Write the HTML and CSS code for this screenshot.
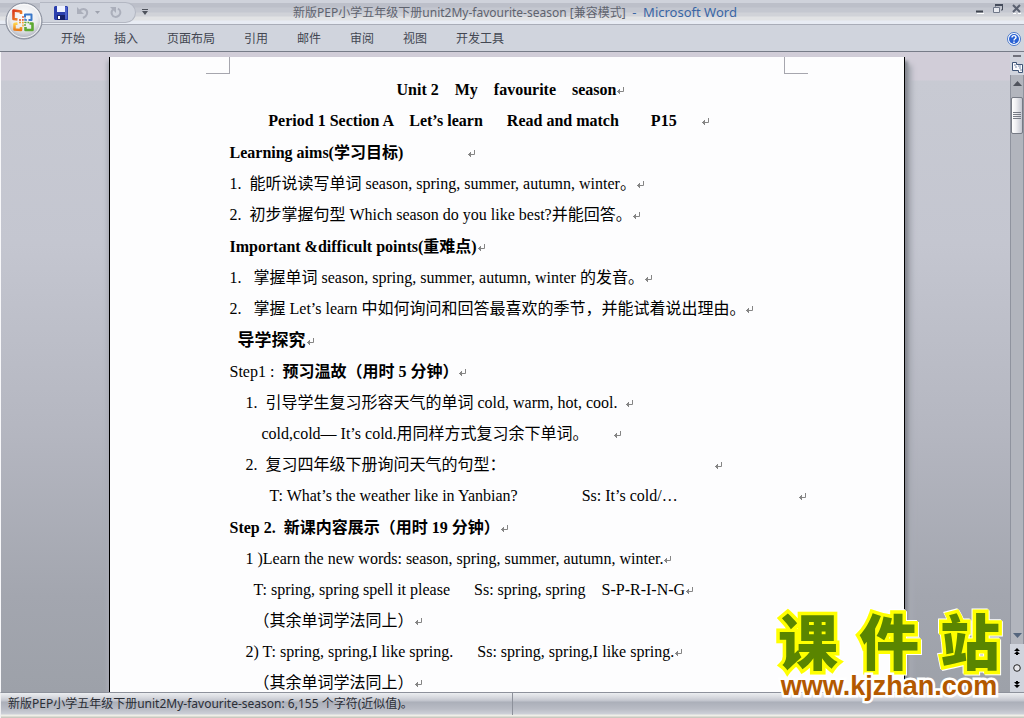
FILE: index.html
```html
<!DOCTYPE html>
<html lang="zh-CN">
<head>
<meta charset="utf-8">
<title>新版PEP小学五年级下册unit2My-favourite-season</title>
<link rel="stylesheet" href="styles.css">
</head>
<body>
<svg class="defs" aria-hidden="true">
  <symbol id="ret" viewBox="0 0 8 8"><path d="M7.5 0v4.5H1M3.5 2v5M2.5 3v3M1.500 4v1" fill="none" stroke="#858585"/></symbol>
</svg>
<header class="titlebar">
  <button class="office" aria-label="Office">
    <svg viewBox="0 0 38 38" width="38" height="38">
      <defs>
        <radialGradient id="orb" cx="50%" cy="35%" r="65%"><stop offset="0" stop-color="#fff"/><stop offset=".6" stop-color="#e9eaee"/><stop offset="1" stop-color="#a9adb8"/></radialGradient>
        <linearGradient id="og" x1="0" y1="0" x2="1" y2="1"><stop offset="0" stop-color="#d9381c"/><stop offset="1" stop-color="#f59a2c"/></linearGradient>
        <linearGradient id="oy" x1="0" y1="0" x2="0" y2="1"><stop offset="0" stop-color="#ffd24a"/><stop offset="1" stop-color="#ea7a18"/></linearGradient>
      </defs>
      <circle cx="19" cy="19" r="18" fill="url(#orb)" stroke="#858b99"/>
      <circle cx="19" cy="19" r="16.500" fill="none" stroke="#fff" opacity=".8"/>
      <g fill="none" stroke-linejoin="round">
        <path d="M16 12V9.500L8.500 8.500v8.500l4 .5" stroke="url(#og)" stroke-width="2.600"/>
        <path d="M20 15.500v-3h6.500v5.500h-3" stroke="#3b78c9" stroke-width="2"/>
        <path d="M16 25v3l-6.500-.5V22l3-.5" stroke="url(#oy)" stroke-width="2.600"/>
        <path d="M20.500 25v3h7v-6.500h-3" stroke="#5da832" stroke-width="2.600"/>
      </g>
      <path d="M18 14v4h-4" fill="none" stroke="#e0562a" stroke-width="1.400" stroke-dasharray="2 1"/>
      <path d="M20 16.500V18h2" fill="none" stroke="#3b78c9" stroke-width="1.400"/>
      <path d="M14 20.500h4v4" fill="none" stroke="#f0a030" stroke-width="1.400" stroke-dasharray="2 1"/>
      <path d="M20 24v-3.500h4" fill="none" stroke="#5da832" stroke-width="1.400" stroke-dasharray="2 1"/>
    </svg>
  </button>
  <div class="quick">
    <button aria-label="保存"><svg width="14" height="14" viewBox="0 0 14 14"><path d="M0 1l1-1h12l1 1v13H1l-1-1z" fill="#2b3fae"/><path d="M3 0h8v6H3z" fill="#eef2ff"/><path d="M3 9h8v5H3z" fill="#16206a"/><path d="M4 10h2v3H4z" fill="#fff"/><path d="M12 1v12" stroke="#6e84e8"/></svg></button>
    <button class="undo" aria-label="撤消"><svg width="13" height="13" viewBox="0 0 13 13"><path d="M3 5c5-4 9-1 8 3-.5 2-2 3-4 4" fill="none" stroke="#abafbb" stroke-width="2"/><path d="M1 1v7h7z" fill="#abafbb"/></svg></button>
    <button class="drop" aria-label="撤消列表"><svg width="5" height="3" viewBox="0 0 5 3"><path d="M0 0h5L2.500 3z" fill="#9ea2ae"/></svg></button>
    <button class="redo" aria-label="重复"><svg width="13" height="13" viewBox="0 0 13 13"><path d="M9 2.500c3 2 3 5 1 7s-6 2-7-1c-1-2 0-4 1-5" fill="none" stroke="#abafbb" stroke-width="2"/><path d="M1 1h6v6z" fill="#abafbb"/></svg></button>
  </div>
  <button class="customize" aria-label="自定义快速访问工具栏"><svg width="6" height="6" viewBox="0 0 6 6"><path d="M0 .5h6" stroke="#4e525c"/><path d="M0 2h6L3 6z" fill="#4e525c"/></svg></button>
  <h1 class="caption">新版PEP小学五年级下册unit2My-favourite-season [兼容模式] <span class="brand"> -  Microsoft Word</span></h1>
  <div class="winbtns">
    <button aria-label="最小化"><svg width="8" height="10" viewBox="0 0 8 10"><path d="M0 7.500h7" stroke="#3f444f" stroke-width="2"/><path d="M1 9.500h7" stroke="#fff"/></svg></button>
    <button aria-label="还原"><svg width="10" height="10" viewBox="0 0 10 10"><path d="M2.500 2.500V1h7v5H8" fill="none" stroke="#454c5c"/><path d="M2 1h8" stroke="#454c5c" stroke-width="2"/><path d="M.5 3.500h6v5h-6z" fill="#e8eaf0" stroke="#6f7789"/></svg></button>
    <button aria-label="关闭"><svg width="10" height="10" viewBox="0 0 10 10"><path d="M1 9.500h3M6 9.500h3" stroke="#fff"/><path d="M1 1l7 7M8 1L1 8" stroke="#596070" stroke-width="2"/></svg></button>
  </div>
</header>
<nav class="tabs">
  <button>开始</button><button>插入</button><button>页面布局</button><button>引用</button><button>邮件</button><button>审阅</button><button>视图</button><button>开发工具</button>
  <button class="help" aria-label="帮助"><svg width="14" height="14" viewBox="0 0 14 14"><circle cx="7" cy="7" r="6.500" fill="#fff" stroke="#4b78c8"/><circle cx="7" cy="7" r="5" fill="#2a62d4"/><path d="M5 5.500c0-2.500 4-2.500 4 0 0 1.300-2 1.300-2 3M7 9.500V11" fill="none" stroke="#fff" stroke-width="1.400"/></svg></button>
</nav>
<div class="work">
  <main class="canvas">
    <article class="page">
      <div class="marks"><i></i><i></i></div>
      <section class="center">
        <p><b>Unit 2    My    favourite    season</b><svg class="ret"><use href="#ret"/></svg></p>
        <p class="period"><b>Period 1 Section A    Let’s learn</b><b class="t6">Read and match</b><b class="t8">P15</b><svg class="ret t6"><use href="#ret"/></svg></p>
      </section>
      <section>
        <p><b>Learning aims(学习目标)</b><svg class="ret t16"><use href="#ret"/></svg></p>
        <p>1.  能听说读写单词 season, spring, summer, autumn, winter。<svg class="ret"><use href="#ret"/></svg></p>
        <p>2.  初步掌握句型 Which season do you like best?并能回答。<svg class="ret"><use href="#ret"/></svg></p>
      </section>
      <section>
        <p><b>Important &amp;difficult points(重难点)</b><svg class="ret"><use href="#ret"/></svg></p>
        <p>1.   掌握单词 season, spring, summer, autumn, winter 的发音。<svg class="ret"><use href="#ret"/></svg></p>
        <p>2.   掌握 Let’s learn 中如何询问和回答最喜欢的季节，并能试着说出理由。<svg class="ret"><use href="#ret"/></svg></p>
      </section>
      <section>
        <p class="in8"><b class="cb">导学探究</b><svg class="ret"><use href="#ret"/></svg></p>
        <p>Step1 :  <b>预习温故（用时 5 分钟）</b><svg class="ret"><use href="#ret"/></svg></p>
        <p class="in16">1.  引导学生复习形容天气的单词 cold, warm, hot, cool.  <svg class="ret"><use href="#ret"/></svg></p>
        <p class="in32">cold,cold— It’s cold.用同样方式复习余下单词。<svg class="ret t6"><use href="#ret"/></svg></p>
        <p class="in16">2.  复习四年级下册询问天气的句型：<svg class="ret t52"><use href="#ret"/></svg></p>
        <p class="in40">T: What’s the weather like in Yanbian?<span class="t16">Ss: It’s cold/…</span><svg class="ret t30"><use href="#ret"/></svg></p>
      </section>
      <section>
        <p><b>Step 2.  新课内容展示（用时 19 分钟）</b><svg class="ret"><use href="#ret"/></svg></p>
        <p class="in16">1 )Learn the new words: season, spring, summer, autumn, winter.<svg class="ret"><use href="#ret"/></svg></p>
        <p class="in24">T: spring, spring spell it please<span class="t6">Ss: spring, spring    S-P-R-I-N-G</span><svg class="ret"><use href="#ret"/></svg></p>
        <p class="in24">（其余单词学法同上）<svg class="ret"><use href="#ret"/></svg></p>
        <p class="in16">2) T: spring, spring,I like spring.<span class="t6">Ss: spring, spring,I like spring.</span><svg class="ret"><use href="#ret"/></svg></p>
        <p class="in24">（其余单词学法同上）<svg class="ret"><use href="#ret"/></svg></p>
      </section>
    </article>
  </main>
  <aside class="scroll">
    <div class="split"></div>
    <button class="ruler" aria-label="标尺"><svg width="13" height="13" viewBox="0 0 13 13"><path d="M1.500 1.500h4v2h6v8h-4v-2h-6z" fill="#fbfbfd" stroke="#3f5577"/><path d="M3 4h2M4 6h2M8 7h2M9 9h2M7 5h3" stroke="#7388a8"/></svg></button>
    <div class="track">
      <button aria-label="向上"><svg width="9" height="5" viewBox="0 0 9 5"><path d="M0 5h9L4.500 0z" fill="#4f535c"/></svg></button>
      <div class="thumb"></div>
      <button class="down" aria-label="向下"><svg width="9" height="5" viewBox="0 0 9 5"><path d="M0 0h9L4.500 5z" fill="#54657d"/></svg></button>
    </div>
    <div class="browse">
      <button aria-label="前一页"><svg width="6" height="7" viewBox="0 0 6 7"><path d="M0 3h6L3 0zM0 6h6L3 3zM2 6h2v1H2z" fill="#000"/></svg></button>
      <button aria-label="选择浏览对象"><svg width="8" height="8" viewBox="0 0 8 8"><circle cx="4" cy="4" r="3.300" fill="#e6e6ea" stroke="#222"/></svg></button>
      <button aria-label="下一页"><svg width="6" height="7" viewBox="0 0 6 7"><path d="M0 1h6L3 4zM0 4h6L3 7zM2 0h2v1H2z" fill="#000"/></svg></button>
    </div>
  </aside>
  <div class="watermark">
    <div class="wname"><span>课</span><span>件</span><span>站</span></div>
    <div class="wurl">www.kjzhan.com</div>
  </div>
</div>
<footer class="status"><div>新版PEP小学五年级下册unit2My-favourite-season: 6,155 个字符(近似值)。</div></footer>
</body>
</html>
```
FILE: styles.css
```css
* { box-sizing: border-box; }
body {
  margin: 0;
  height: 100vh;
  display: flex;
  flex-direction: column;
  overflow: hidden;
  background: #d0d4dd;
  font: 12px/16px "Noto Sans", "Noto Sans CJK SC", sans-serif;
  color: #434752;
}
button {
  border: 0;
  padding: 0;
  background: none;
  font: inherit;
  color: inherit;
  display: flex;
  align-items: center;
  justify-content: center;
}
.defs { position: absolute; width: 0; height: 0; }

.titlebar {
  position: relative;
  flex: none;
  height: 25px;
  display: flex;
  align-items: center;
  border-bottom: 1px solid #a9adb8;
  background: linear-gradient(#cfd2db 0 3px, #bcbfc9 3px 7px, #c4c7d0 8px 12px, #d0d2d8 13px 16px, #e1e2e4 17px 20px, #e8ecf4 21px);
}
.office { position: absolute; left: 5px; top: 2px; z-index: 2; }
.quick {
  align-self: stretch;
  margin: 2px 0 1px 40px;
  padding: 0 13px 0 14px;
  width: 96px;
  display: flex;
  align-items: center;
  border: 1px solid #b3b7c2;
  border-left: 0;
  border-radius: 0 11px 11px 0;
  background: #d0d4dd;
}
.undo { margin-left: 8px; }
.drop { margin-left: 6px; }
.redo { margin-left: 9px; }
.customize { margin-left: 6px; }
.caption {
  flex: 1;
  margin: 0;
  padding: 0 94px 0 0;
  text-align: center;
  font-size: 12px;
  font-weight: 400;
  color: #5f636e;
  white-space: pre;
}
.caption .brand { font-size: 13px; color: #3a66a5; }
.winbtns { display: flex; gap: 9px; padding: 0 2px 6px 0; }

.tabs {
  flex: none;
  height: 27px;
  padding: 2px 3px 0 61px;
  display: flex;
  align-items: center;
  gap: 29px;
  border-bottom: 1px solid #777c88;
}
.help { margin-left: auto; }

.work { position: relative; flex: 1; min-height: 0; display: flex; border-left: 1px solid #f7f7f9; }
.canvas {
  flex: 1;
  min-width: 0;
  overflow: hidden;
  padding: 5px 0 0 2px;
  background: linear-gradient(#d1cdd8 0 28px, #c8cad3 29px, #c4c6d0 30%, #b4b6c0 60%, #a3a6af 85%, #9da1a9);
}
.page {
  max-width: 796px;
  min-height: 100%;
  margin: 0 auto;
  padding: 0 120px;
  border: solid #000;
  border-width: 0 1px;
  background: #fdfdfe;
  box-shadow: 3px 4px 3px #858890, 7px 8px 5px #a9acb5, -2px 4px 4px #a9acb5;
  color: #000;
  font: 16px/31px "Liberation Serif", "Noto Sans CJK SC", serif;
}
.marks { display: flex; justify-content: space-between; margin: 0 -24px; }
.marks i { width: 24px; height: 17px; border: solid #a6a6ae; border-width: 0 1px 1px 0; }
.marks i + i { border-width: 0 0 1px 1px; }
section { margin-bottom: 1px; }
p { margin: 0; height: 31px; white-space: pre; }
.center p { padding-left: 8px; text-align: center; }
.center .period { padding-right: 44px; }
.cb { font-size: 17px; }
.in8 { padding-left: 8px; }
.in16 { padding-left: 16px; }
.in24 { padding-left: 24px; }
.in32 { padding-left: 32px; }
.in40 { padding-left: 40px; }
.ret { width: 8px; height: 8px; }
.t6 { margin-left: 24px; }
.t8 { margin-left: 32px; }
.t16 { margin-left: 64px; }
.t30 { margin-left: 120px; }
.t52 { margin-left: 208px; }

.scroll { flex: none; width: 14px; display: flex; flex-direction: column; background: #d0d4dd; }
.split { height: 2px; margin: 3px; background: #6f727c; }
.ruler { height: 15px; }
.track {
  flex: 1;
  display: flex;
  flex-direction: column;
  align-items: center;
  padding: 6px 0;
  border: solid #8f939e;
  border-width: 0 1px;
  background: #b2b5bd;
}
.thumb {
  align-self: stretch;
  height: 37px;
  margin-top: 11px;
  border: 1px solid #777b85;
  border-radius: 2px;
  background:
    repeating-linear-gradient(#777b85 0 1px, transparent 1px 2px) center / 8px 7px no-repeat,
    linear-gradient(90deg, #fff, #efeff2 40%, #c3c6d0);
}
.down { margin-top: auto; }
.browse { flex: none; height: 48px; display: flex; flex-direction: column; align-items: center; justify-content: space-around; }

.watermark { position: absolute; right: 20px; bottom: -8px; z-index: 3; width: 230px; }
.wname {
  display: flex;
  justify-content: space-between;
  padding: 0 4px;
  margin-bottom: 6px;
  font: 900 60px/54px "Noto Sans CJK SC", sans-serif;
  color: #5a8500;
  -webkit-text-stroke: 7px #ff0;
  paint-order: stroke fill;
  filter: drop-shadow(1px 1px 0 #fff) drop-shadow(-1px -1px 0 #fff);
}
.wurl {
  position: relative;
  text-align: center;
  font: 700 27px/28px "Liberation Sans", sans-serif;
  color: #b35900;
  -webkit-text-stroke: 5px #fff;
  paint-order: stroke fill;
}

.status {
  flex: none;
  height: 26px;
  display: flex;
  padding-bottom: 3px;
  border: solid #f0f0f2;
  border-width: 0 0 0 1px;
  border-top: 1px solid #8d919b;
  background: linear-gradient(#eceef1, #d4d6dc 5px, #c0c3cc 8px, #abafb9 9px, #b9bcc5 16px, #cdd0d8 21px, #efefe8 22px 23px, #c9c9c0 24px);
  color: #2b2e36;
}
.status div { width: 50%; padding: 3px 7px 0; border-right: 1px solid #8d919b; white-space: nowrap; }
```
